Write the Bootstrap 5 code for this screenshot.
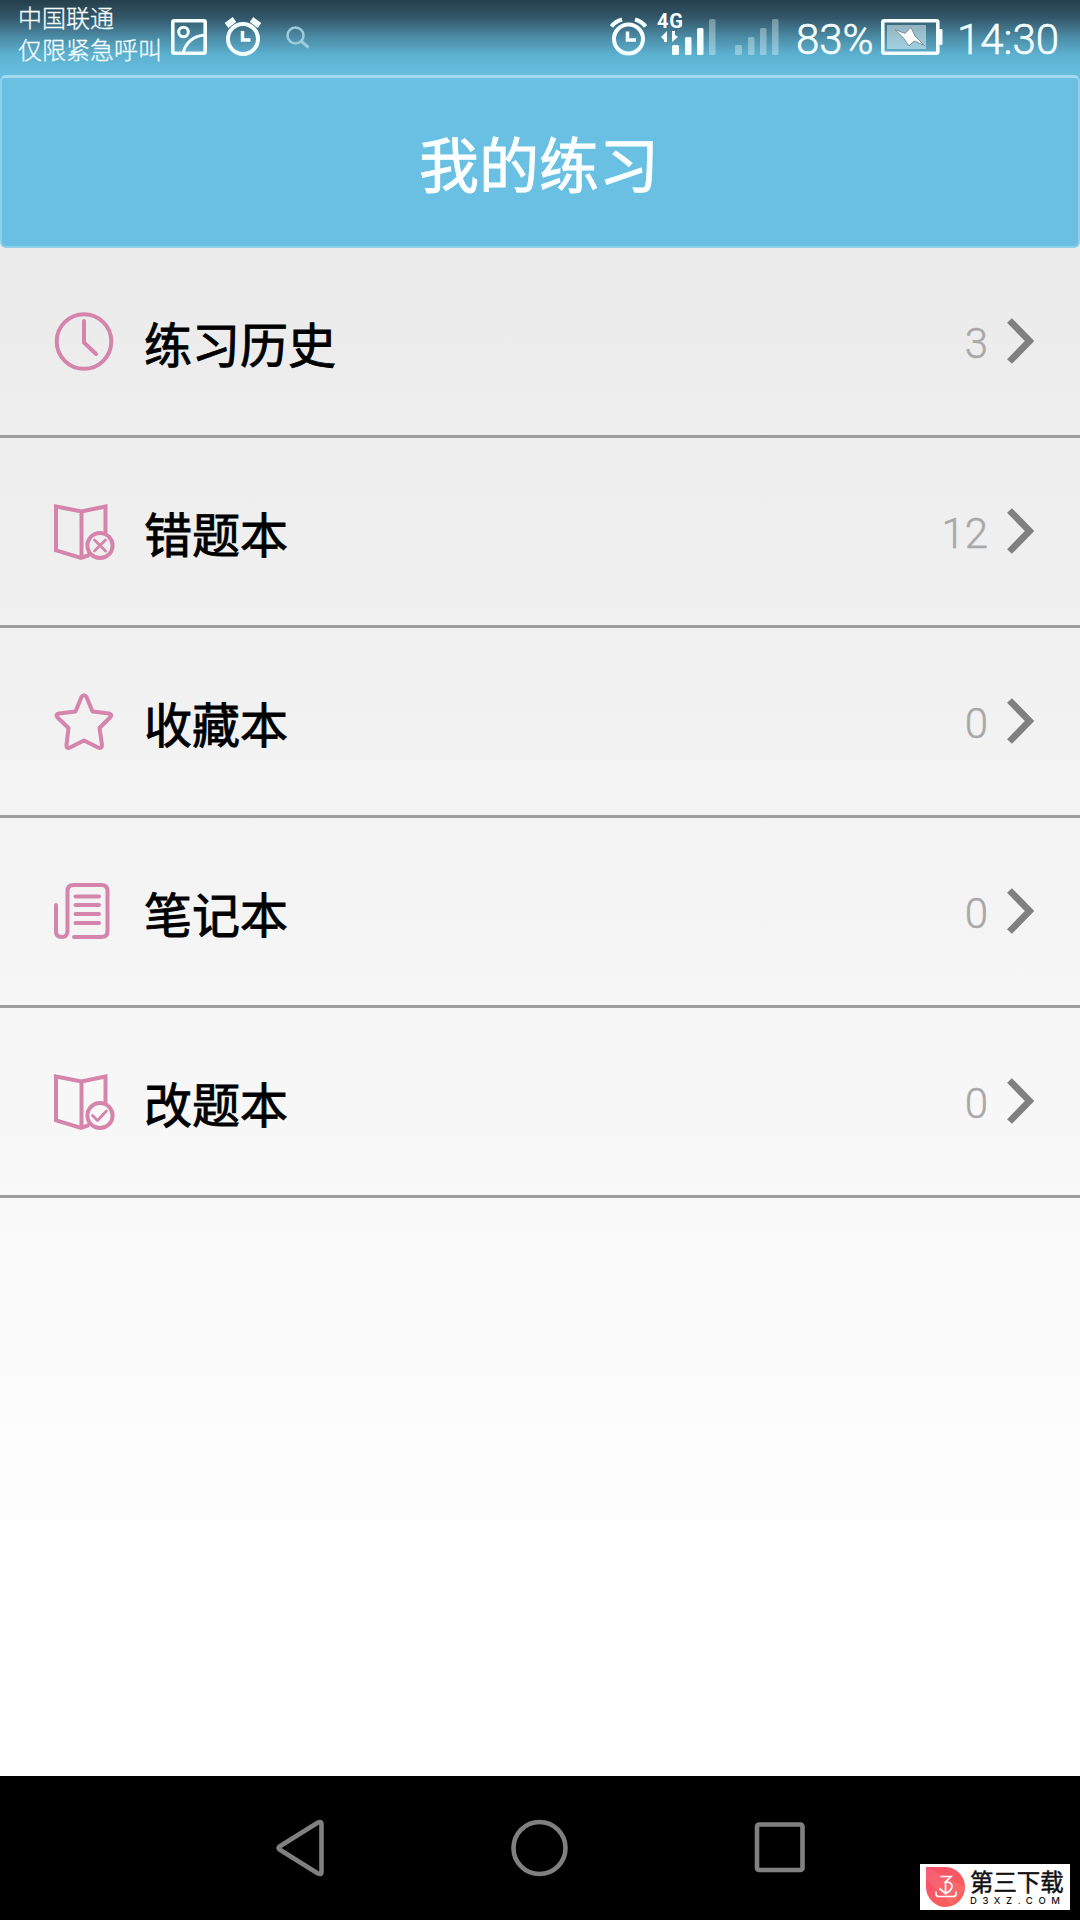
<!DOCTYPE html>
<html lang="zh-CN">
<head>
<meta charset="utf-8">
<meta name="viewport" content="width=device-width, initial-scale=1">
<title>我的练习</title>
<link href="https://cdn.jsdelivr.net/npm/bootstrap@5.3.0/dist/css/bootstrap.min.css" rel="stylesheet">
<style>
body{font-family:Roboto,"Noto Sans CJK SC",sans-serif;height:1920px;overflow:hidden;background:#fff}
svg{display:block;flex:none}
.statusbar{height:75px;background:linear-gradient(#253f4b 0,#33586a 18px,#4b8ba5 37px,#5cb0cf 54px,#67bfe0 75px);color:#f4feff;padding:0 16px 0 18px}
.carrier{font-size:24px;line-height:32px;width:153px;padding-top:1px;font-family:"Noto Sans CJK SC",sans-serif;font-weight:300;-webkit-text-stroke:.3px #f4feff;white-space:nowrap}
.status-num{font-size:42px;line-height:42px;font-weight:300;-webkit-text-stroke:.6px #f4feff;white-space:nowrap}
.titlebar{height:173px;background:#69c0e2;border:2px solid #8fd1ec;border-top:3px solid #a3daf0;border-radius:6px;margin:0}
.titlewrap{background:linear-gradient(#67bfe0 50%,#ebebeb 50%)}
.titlebar h1{font-size:60px;line-height:60px;color:#fbffff;font-weight:400;-webkit-text-stroke:.9px #fbffff;font-family:"Noto Sans CJK SC",sans-serif;padding-right:2px}
.screen{background:linear-gradient(#ebebeb 0,#f8f8f8 60%,#fefefe 85%,#fff 100%)}
.list-group-flush>.list-group-item.practice-row{height:190px;border:0;border-bottom:3px solid #9d9d9d;border-radius:0;background:transparent;padding:0 46px 0 54px}
.row-label{font-size:48px;line-height:60px;color:#000;font-weight:400;-webkit-text-stroke:.9px #000;font-family:"Noto Sans CJK SC",sans-serif;margin-left:30px;padding-top:1px}
.row-count{font-size:42px;line-height:50px;font-weight:300;-webkit-text-stroke:.4px #a8a8a8;color:#a8a8a8;margin-right:18px;padding-top:5px}
.pink{fill:none;stroke:#d585ac;stroke-width:4;stroke-linecap:round;stroke-linejoin:round}
.navkeys{height:144px;background:#000}
.navkeys svg{fill:none;stroke:#808080;stroke-width:4.6;stroke-linejoin:round}
.stamp{right:10px;bottom:10px;width:150px;height:46px;background:#fff;padding-left:6px}
.stamp-name{font:400 23.4px/27px "Noto Sans CJK SC",sans-serif;color:#111;-webkit-text-stroke:.5px #111}
.stamp-url{font:500 9.5px/11px Inter,sans-serif;color:#111;letter-spacing:5.6px}
</style>
<script src="https://cdn.jsdelivr.net/npm/bootstrap@5.3.0/dist/js/bootstrap.bundle.min.js"></script>
</head>
<body class="d-flex flex-column position-relative">
<svg width="0" height="0" class="position-absolute"><defs>
<symbol id="chev" viewBox="0 0 28 48"><path d="M3.5 2.500 23.500 23 3.500 43.500" fill="none" stroke="#808080" stroke-width="6.800"/></symbol>
<symbol id="book" viewBox="0 0 62 60"><path d="M34 53.500 27 56 2 48.300V4.500L27.500 9.500 51.500 4.500V30M27.500 9.500V55" style="stroke-linejoin:miter"/><circle cx="46" cy="43.500" r="12.600"/></symbol>
</defs></svg>

<header class="statusbar d-flex align-items-start">
  <div class="carrier">中国联通<br>仅限紧急呼叫</div>
  <svg width="36" height="36" viewBox="0 0 36 36" style="margin-top:19px" fill="none" stroke="#f4feff" stroke-width="3"><rect x="1.800" y="1.800" width="32.400" height="32.400" rx="1.500" stroke-width="3.600"/><circle cx="12.500" cy="13" r="4.800"/><path d="M12 34C15 23 23 17 34 16"/></svg>
  <svg width="40" height="40" viewBox="0 0 40 40" style="margin:17px 0 0 16px" fill="none" stroke="#f4feff"><circle cx="20" cy="22" r="15" stroke-width="4"/><path d="M19.500 14V23H27.500" stroke-width="3.500"/><path d="M3.500 8.500 11.500 2.500M28.500 2.500 36.500 8.500" stroke-width="6"/></svg>
  <svg width="24" height="24" viewBox="0 0 24 24" style="margin:26px 0 0 23px" fill="none" stroke="#9dcbdb" stroke-width="2.500"><circle cx="9.500" cy="9.500" r="8"/><path d="M15.500 15.500 22.500 21.500" stroke-width="3"/></svg>
  <svg class="ms-auto" width="38" height="40" viewBox="0 0 38 40" style="margin-top:17px" fill="none" stroke="#f4feff"><circle cx="18.500" cy="22" r="14.500" stroke-width="4"/><path d="M17.500 14.500V23H26" stroke-width="3.500"/><path d="M1.500 9.500Q5 4.500 12 2.500M25 2.500Q32 4.500 35.500 9.500" stroke-width="4"/></svg>
  <svg width="60" height="46" viewBox="0 0 60 46" style="margin:10px 0 0 9px" fill="#f4feff"><text x="0" y="17.700" font-size="20" font-weight="700" textLength="26">4G</text><path d="M4 27 10 21V32H7V30ZM21 27 15 32V21H18V25Z"/><rect x="15" y="35" width="7" height="10" rx="1.500"/><rect x="28" y="27" width="6.500" height="18" rx="1.500"/><rect x="40" y="18" width="6.500" height="27" rx="1.500"/><rect x="52" y="9" width="6.500" height="36" rx="1.500" opacity=".35"/></svg>
  <svg width="45" height="46" viewBox="0 0 45 46" style="margin:10px 0 0 17px" fill="#f4feff" opacity=".35"><rect x="1" y="35" width="7" height="10" rx="1.500"/><rect x="14" y="27" width="6.500" height="18" rx="1.500"/><rect x="26" y="18" width="6.500" height="27" rx="1.500"/><rect x="38" y="9" width="6.500" height="36" rx="1.500"/></svg>
  <div class="status-num" style="margin:19px 0 0 17px;width:85px">83%</div>
  <svg width="62" height="36" viewBox="0 0 62 36"  style="margin-top:19px"><rect x="1.800" y="1.800" width="55" height="32.400" rx="1.500" fill="none" stroke="#f4feff" stroke-width="3.600"/><rect x="6" y="6" width="39" height="24" fill="#e6f6fb" opacity=".52"/><rect x="57" y="10" width="4.500" height="16" rx="1" fill="#f4feff"/><path d="M14 10.500 24 14.500 30 8.500 34 17 43.500 26.500 33 22 28 27 22.500 19Z" fill="#fff" stroke="#73939f" stroke-width="1"/></svg>
  <div class="status-num" style="margin:19px 0 0 14px;width:107px">14:30</div>
</header>

<div class="titlewrap"><div class="titlebar d-flex align-items-center justify-content-center"><h1 class="m-0">我的练习</h1></div></div>

<main class="screen flex-grow-1">
  <div class="list-group list-group-flush">
    <a class="list-group-item practice-row d-flex align-items-center"><svg class="pink" width="60" height="60"><circle cx="30" cy="29.500" r="27.300"/><path d="M30 9V30.500L42 42"/></svg><span class="row-label">练习历史</span><span class="row-count ms-auto">3</span><svg width="28" height="48"><use href="#chev"/></svg></a>
    <a class="list-group-item practice-row d-flex align-items-center"><svg class="pink" width="60" height="60" overflow="visible"><use href="#book" width="62" height="60"/><path d="M40.500 38 51.500 49M51.500 38 40.500 49" style="stroke-width:2.800"/></svg><span class="row-label">错题本</span><span class="row-count ms-auto">12</span><svg width="28" height="48"><use href="#chev"/></svg></a>
    <a class="list-group-item practice-row d-flex align-items-center"><svg class="pink" width="60" height="60"><path d="M27.500 5Q30 1.500 32.500 5L38.500 19.500 55 21.500Q59 22.500 56 25.500L45.500 36 48 53Q48 57 44 55.500L30 48.500 16 55.500Q12 57 12.500 53L14.500 36 3.500 25.500Q1 22.500 5 21.500L21.500 19.500Z"/></svg><span class="row-label">收藏本</span><span class="row-count ms-auto">0</span><svg width="28" height="48"><use href="#chev"/></svg></a>
    <a class="list-group-item practice-row d-flex align-items-center"><svg class="pink" width="60" height="60"><path d="M2 23V49Q2 55 7.700 55T13.500 49V9Q13.500 3 19.500 3H47.500Q53.500 3 53.500 9V49Q53.500 55 47.500 55H20M21.500 14.500H45M21.500 23H45M21.500 32H45M21.500 41H45"/></svg><span class="row-label">笔记本</span><span class="row-count ms-auto">0</span><svg width="28" height="48"><use href="#chev"/></svg></a>
    <a class="list-group-item practice-row d-flex align-items-center"><svg class="pink" width="60" height="60" overflow="visible"><use href="#book" width="62" height="60"/><path d="M38.500 43.500 43.500 48.500 52.500 39" style="stroke-width:2.800"/></svg><span class="row-label">改题本</span><span class="row-count ms-auto">0</span><svg width="28" height="48"><use href="#chev"/></svg></a>
  </div>
</main>

<nav class="navkeys d-flex align-items-center justify-content-center">
  <svg width="52" height="60" viewBox="0 0 52 60"><path d="M5.500 28.500Q3.500 30 5.500 31.500L44 55.500Q47.500 57 47.500 54V6Q47.500 3 44 4.500Z"/></svg>
  <svg width="60" height="60" viewBox="0 0 60 60" style="margin:0 183px 0 184px"><circle cx="29.500" cy="30" r="26"/></svg>
  <svg width="54" height="60" viewBox="0 0 54 60"><rect x="4" y="6.500" width="45.500" height="45.500" rx="2"/></svg>
</nav>

<aside class="stamp position-absolute d-flex align-items-center">
  <svg width="39" height="40" viewBox="0 0 39 40"><defs><linearGradient id="lg" x2="1" y2="1"><stop stop-color="#f6506c"/><stop offset="1" stop-color="#fb6257"/></linearGradient></defs><path d="M0 0H20A19.500 20 0 1 1 0 20Z" fill="url(#lg)"/><path d="M0 0 39 20 26 38 0 12Z" fill="#fff" opacity=".08"/><path d="M14.500 9.500H25L19.500 15Q26.500 15 26 20 25 24 19.500 26.500M19.500 15V26.500L13.500 21.500M10 24.500V27Q10 29.500 13 29.500H27Q30 29.500 30 27V24.500" fill="none" stroke="#fff" stroke-width="1.700"/></svg>
  <div style="margin-left:5px"><div class="stamp-name">第三下载</div><div class="stamp-url">D3XZ.COM</div></div>
</aside>
</body>
</html>
